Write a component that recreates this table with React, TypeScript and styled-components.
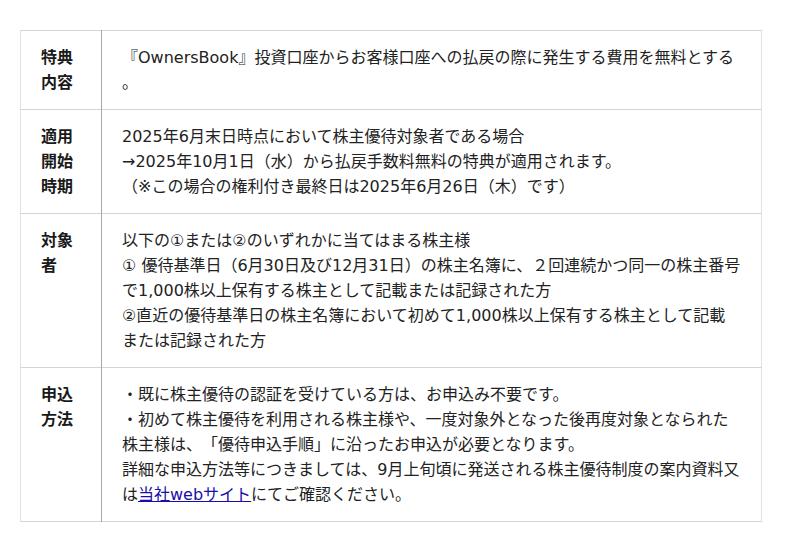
import React from 'react';
import styled, { createGlobalStyle } from 'styled-components';

const GlobalStyle = createGlobalStyle`
  html, body {
    margin: 0;
    padding: 0;
    background: #ffffff;
  }
  body {
    font-family: "DejaVu Sans", "Noto Sans CJK JP", sans-serif;
    color: #222222;
  }
`;

const Page = styled.div`
  padding: 30px 0 0 20px;
`;

const Table = styled.table`
  width: 742px;
  border-collapse: collapse;
  table-layout: fixed;
  font-size: 16px;
  line-height: 25px;
  text-spacing-trim: space-all;
  border-left: 1px solid #e2e2e2;
  border-right: 1px solid #e2e2e2;

  tr {
    border-top: 1px solid #d4d4d4;
    border-bottom: 1px solid #d4d4d4;
  }
`;

const Head = styled.th`
  width: 40px;
  padding: 14px 20px;
  text-align: left;
  vertical-align: top;
  font-weight: bold;
  color: #1a1a1a;
  border-right: 1px solid #a8a8a8;
`;

const Cell = styled.td`
  padding: 14px 20px;
  vertical-align: top;
  color: #222222;
`;

const Link = styled.a`
  color: #1a0dab;
  text-decoration: underline;
`;

interface Row {
  label: string;
  body: React.ReactNode;
}

const rows: Row[] = [
  {
    label: '特典内容',
    body: <>『OwnersBook』投資口座からお客様口座への払戻の際に発生する費用を無料とする<br />。</>,
  },
  {
    label: '適用開始時期',
    body: (
      <>
        2025年6月末日時点において株主優待対象者である場合
        <br />
        →2025年10月1日（水）から払戻手数料無料の特典が適用されます。
        <br />
        （※この場合の権利付き最終日は2025年6月26日（木）です）
      </>
    ),
  },
  {
    label: '対象者',
    body: (
      <>
        以下の①または②のいずれかに当てはまる株主様
        <br />
        ① 優待基準日（6月30日及び12月31日）の株主名簿に、２回連続かつ同一の株主番号で1,000株以上保有する株主として記載または記録された方
        <br />
        ②直近の優待基準日の株主名簿において初めて1,000株以上保有する株主として記載または記録された方
      </>
    ),
  },
  {
    label: '申込方法',
    body: (
      <>
        ・既に株主優待の認証を受けている方は、お申込み不要です。
        <br />
        ・初めて株主優待を利用される株主様や、一度対象外となった後再度対象となられた株主様は、「優待申込手順」に沿ったお申込が必要となります。
        <br />
        詳細な申込方法等につきましては、9月上旬頃に発送される株主優待制度の案内資料又は
        <Link href="#">当社webサイト</Link>
        にてご確認ください。
      </>
    ),
  },
];

export default function App() {
  return (
    <Page>
      <GlobalStyle />
      <Table>
        <tbody>
          {rows.map((row) => (
            <tr key={row.label}>
              <Head>{row.label}</Head>
              <Cell>{row.body}</Cell>
            </tr>
          ))}
        </tbody>
      </Table>
    </Page>
  );
}
